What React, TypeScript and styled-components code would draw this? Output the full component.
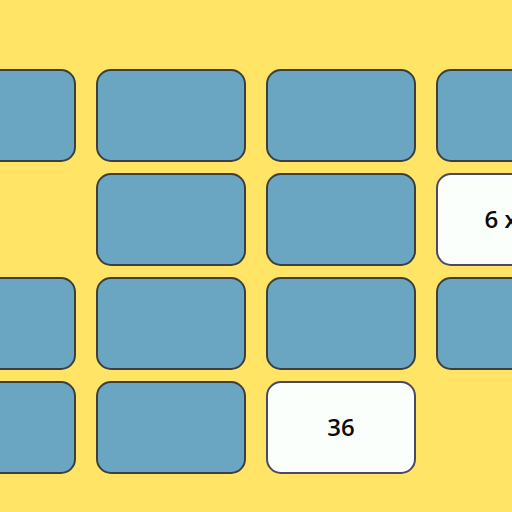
import React from 'react';
import styled, { createGlobalStyle } from 'styled-components';

const GlobalStyle = createGlobalStyle`
  html, body {
    margin: 0;
    padding: 0;
    background: #ffe466;
    overflow: hidden;
  }
  body {
    font-family: 'Open Sans', 'Noto Sans', sans-serif;
  }
`;

const Page = styled.div`
  width: 512px;
  height: 512px;
  display: flex;
  justify-content: center;
  padding-top: 69px;
  box-sizing: border-box;
  overflow: hidden;
`;

const Board = styled.div`
  flex: none;
  width: 660px;
  display: grid;
  grid-template-columns: repeat(4, 150px);
  grid-auto-rows: 93px;
  column-gap: 20px;
  row-gap: 11px;
`;

const Card = styled.div<{ faceUp?: boolean; gone?: boolean }>`
  box-sizing: border-box;
  border-radius: 15px;
  border: 2.5px solid ${(p) => (p.faceUp ? '#4a4868' : '#3b3f42')};
  background: ${(p) => (p.faceUp ? '#fbfffb' : '#6aa6c2')};
  visibility: ${(p) => (p.gone ? 'hidden' : 'visible')};
  display: flex;
  align-items: center;
  justify-content: center;
  padding-bottom: 2px;
  font-size: 24px;
  font-weight: 600;
  color: #0a0a0a;
`;

type Slot = { id: number; text?: string; faceUp?: boolean; gone?: boolean };

const slots: Slot[] = [
  { id: 0 }, { id: 1 }, { id: 2 }, { id: 3 },
  { id: 4, gone: true }, { id: 5 }, { id: 6 }, { id: 7, faceUp: true, text: '6 x 6' },
  { id: 8 }, { id: 9 }, { id: 10 }, { id: 11 },
  { id: 12 }, { id: 13 }, { id: 14, faceUp: true, text: '36' }, { id: 15, gone: true },
];

const App = () => (
  <>
    <GlobalStyle />
    <Page>
      <Board>
        {slots.map((s) => (
          <Card key={s.id} faceUp={s.faceUp} gone={s.gone}>
            {s.faceUp && s.text}
          </Card>
        ))}
      </Board>
    </Page>
  </>
);

export default App;
